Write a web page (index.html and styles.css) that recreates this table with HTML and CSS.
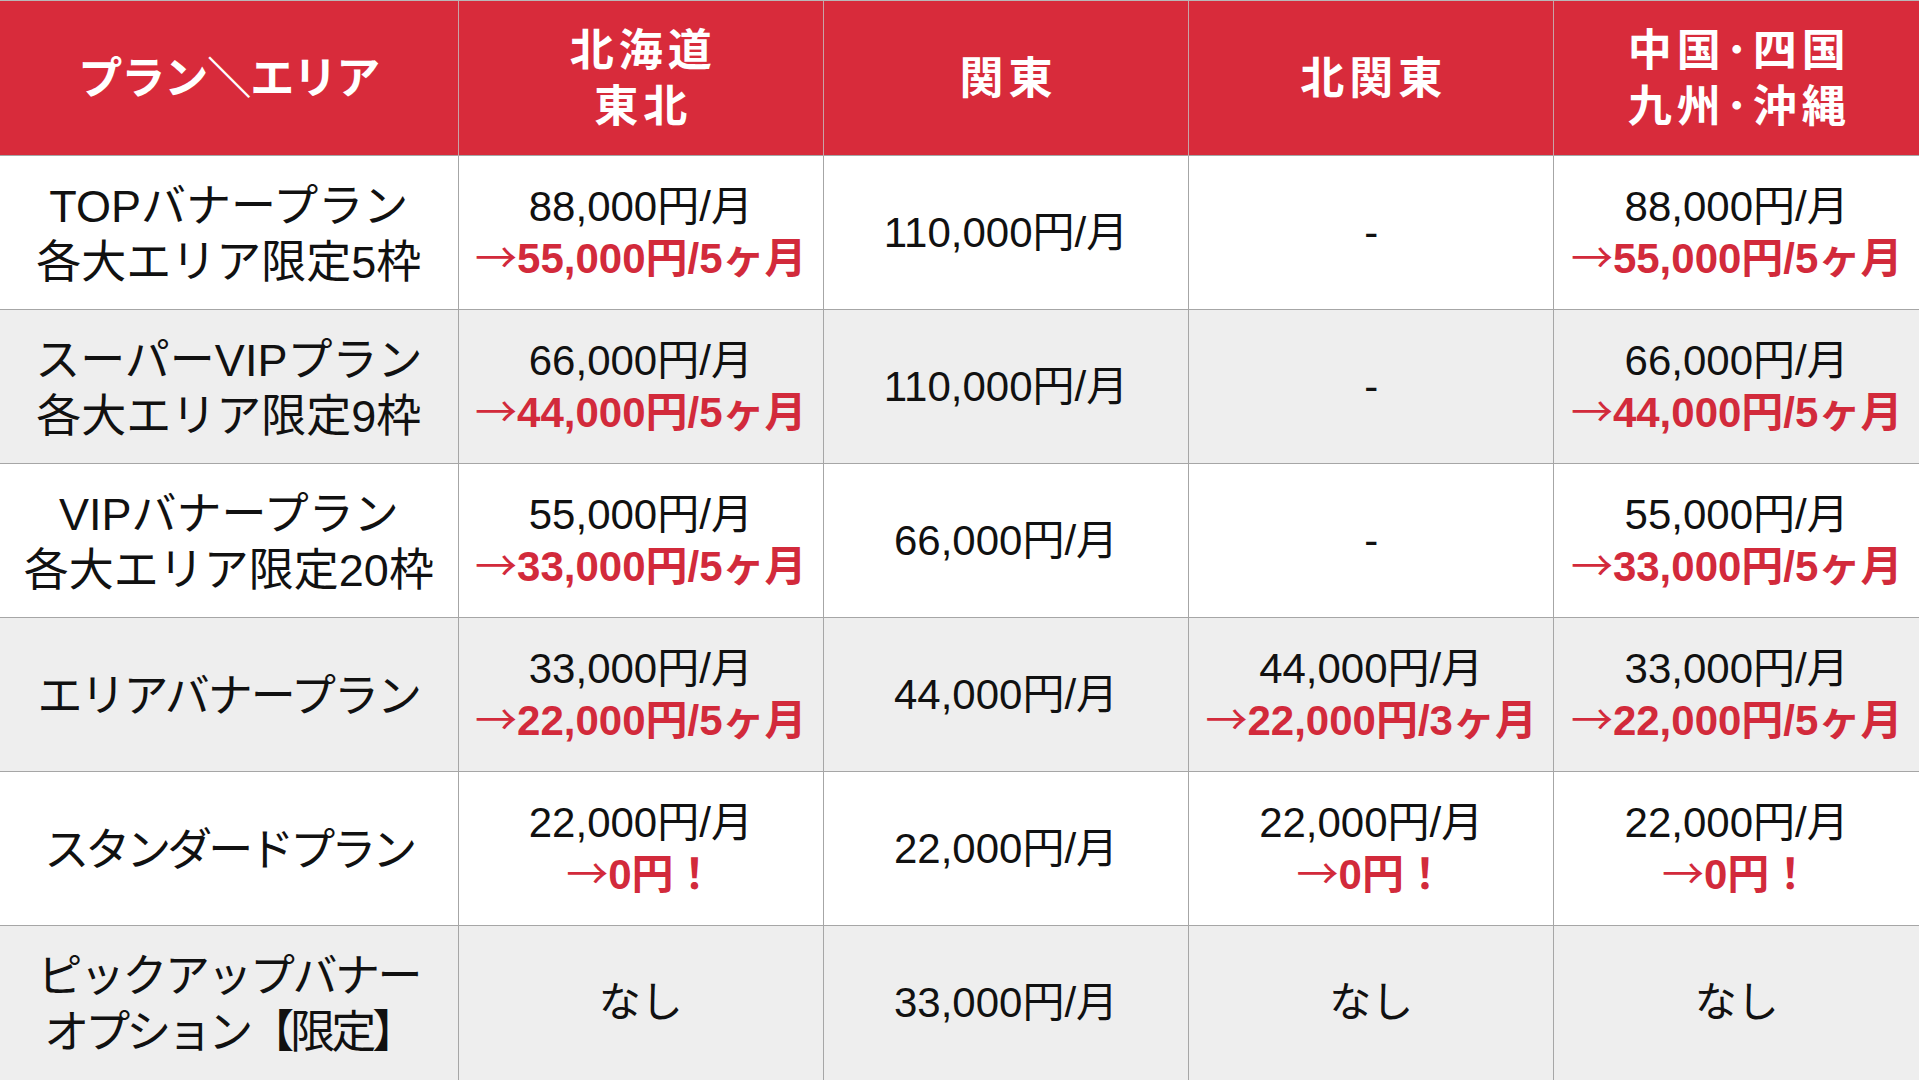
FILE: index.html
```html
<!DOCTYPE html>
<html lang="ja">
<head>
<meta charset="utf-8">
<title>プラン料金表</title>
<link rel="stylesheet" href="styles.css">
</head>
<body>
<table class="price-table">
  <colgroup>
    <col class="col-plan">
    <col class="col-area">
    <col class="col-area">
    <col class="col-area">
    <col class="col-area">
  </colgroup>
  <thead>
    <tr class="head-row">
      <th class="head-first">プラン＼エリア</th>
      <th>北海道<br>東北</th>
      <th>関東</th>
      <th>北関東</th>
      <th>中国･四国<br>九州･沖縄</th>
    </tr>
  </thead>
  <tbody>
    <tr class="row">
      <td class="plan">TOPバナープラン<br>各大エリア限定5枠</td>
      <td class="price">88,000円/月<br><span class="sale"><span class="arrow">→</span>55,000円/5ヶ月</span></td>
      <td class="price">110,000円/月</td>
      <td class="price">-</td>
      <td class="price">88,000円/月<br><span class="sale"><span class="arrow">→</span>55,000円/5ヶ月</span></td>
    </tr>
    <tr class="row alt">
      <td class="plan">スーパーVIPプラン<br>各大エリア限定9枠</td>
      <td class="price">66,000円/月<br><span class="sale"><span class="arrow">→</span>44,000円/5ヶ月</span></td>
      <td class="price">110,000円/月</td>
      <td class="price">-</td>
      <td class="price">66,000円/月<br><span class="sale"><span class="arrow">→</span>44,000円/5ヶ月</span></td>
    </tr>
    <tr class="row">
      <td class="plan">VIPバナープラン<br>各大エリア限定20枠</td>
      <td class="price">55,000円/月<br><span class="sale"><span class="arrow">→</span>33,000円/5ヶ月</span></td>
      <td class="price">66,000円/月</td>
      <td class="price">-</td>
      <td class="price">55,000円/月<br><span class="sale"><span class="arrow">→</span>33,000円/5ヶ月</span></td>
    </tr>
    <tr class="row alt">
      <td class="plan"><span class="kana-a">エリアバナープラン</span></td>
      <td class="price">33,000円/月<br><span class="sale"><span class="arrow">→</span>22,000円/5ヶ月</span></td>
      <td class="price">44,000円/月</td>
      <td class="price">44,000円/月<br><span class="sale"><span class="arrow">→</span>22,000円/3ヶ月</span></td>
      <td class="price">33,000円/月<br><span class="sale"><span class="arrow">→</span>22,000円/5ヶ月</span></td>
    </tr>
    <tr class="row">
      <td class="plan"><span class="kana-c">スタンダードプラン</span></td>
      <td class="price">22,000円/月<br><span class="sale"><span class="arrow">→</span>0円！</span></td>
      <td class="price">22,000円/月</td>
      <td class="price">22,000円/月<br><span class="sale"><span class="arrow">→</span>0円！</span></td>
      <td class="price">22,000円/月<br><span class="sale"><span class="arrow">→</span>0円！</span></td>
    </tr>
    <tr class="row alt last">
      <td class="plan"><span class="kana-b">ピックアップバナー</span><br><span class="kana-c">オプション【限定】</span></td>
      <td class="price">なし</td>
      <td class="price">33,000円/月</td>
      <td class="price">なし</td>
      <td class="price">なし</td>
    </tr>
  </tbody>
</table>
</body>
</html>
```

FILE: styles.css
```css
html, body {
  margin: 0;
  padding: 0;
  background: #ffffff;
}

.price-table {
  width: 1919px;
  height: 1080px;
  table-layout: fixed;
  border-collapse: collapse;
  font-family: "Liberation Sans", "Noto Sans CJK JP", sans-serif;
  color: #111111;
}

.col-plan { width: 458px; }
.col-area { width: 365px; }

.head-row { height: 155px; }

.head-row th {
  background: #d82b3b;
  color: #ffffff;
  font-family: "Noto Sans CJK JP", sans-serif;
  font-weight: 700;
  font-size: 44px;
  line-height: 56px;
  letter-spacing: 5px;
  text-align: center;
  vertical-align: middle;
  padding: 0 0 6px 5px;
  border-left: 1px solid #c9a2a6;
  border-top: 1px solid #b8b8b8;
}

.head-row .head-first {
  border-left: none;
  letter-spacing: -1px;
  padding-left: 0;
}

.row { height: 154px; }
.row.last { height: 155px; }

.row td {
  text-align: center;
  vertical-align: middle;
  padding: 0;
  border-top: 1px solid #a6a6a6;
  border-left: 1px solid #a6a6a6;
  font-size: 42px;
  line-height: 52px;
  white-space: nowrap;
}

.row td:first-child { border-left: none; }

.row.alt td { background: #eeeeee; }

.row .plan {
  font-size: 45px;
  line-height: 56px;
  padding-top: 4px;
}

.kana-a { letter-spacing: -2px; }
.kana-b { letter-spacing: -2.5px; }
.kana-c { letter-spacing: -4px; }

.sale {
  color: #d22a3b;
  font-weight: 700;
}

.arrow {
  font-family: "Noto Sans CJK JP", sans-serif;
  font-weight: 400;
  line-height: 0;
}
```
